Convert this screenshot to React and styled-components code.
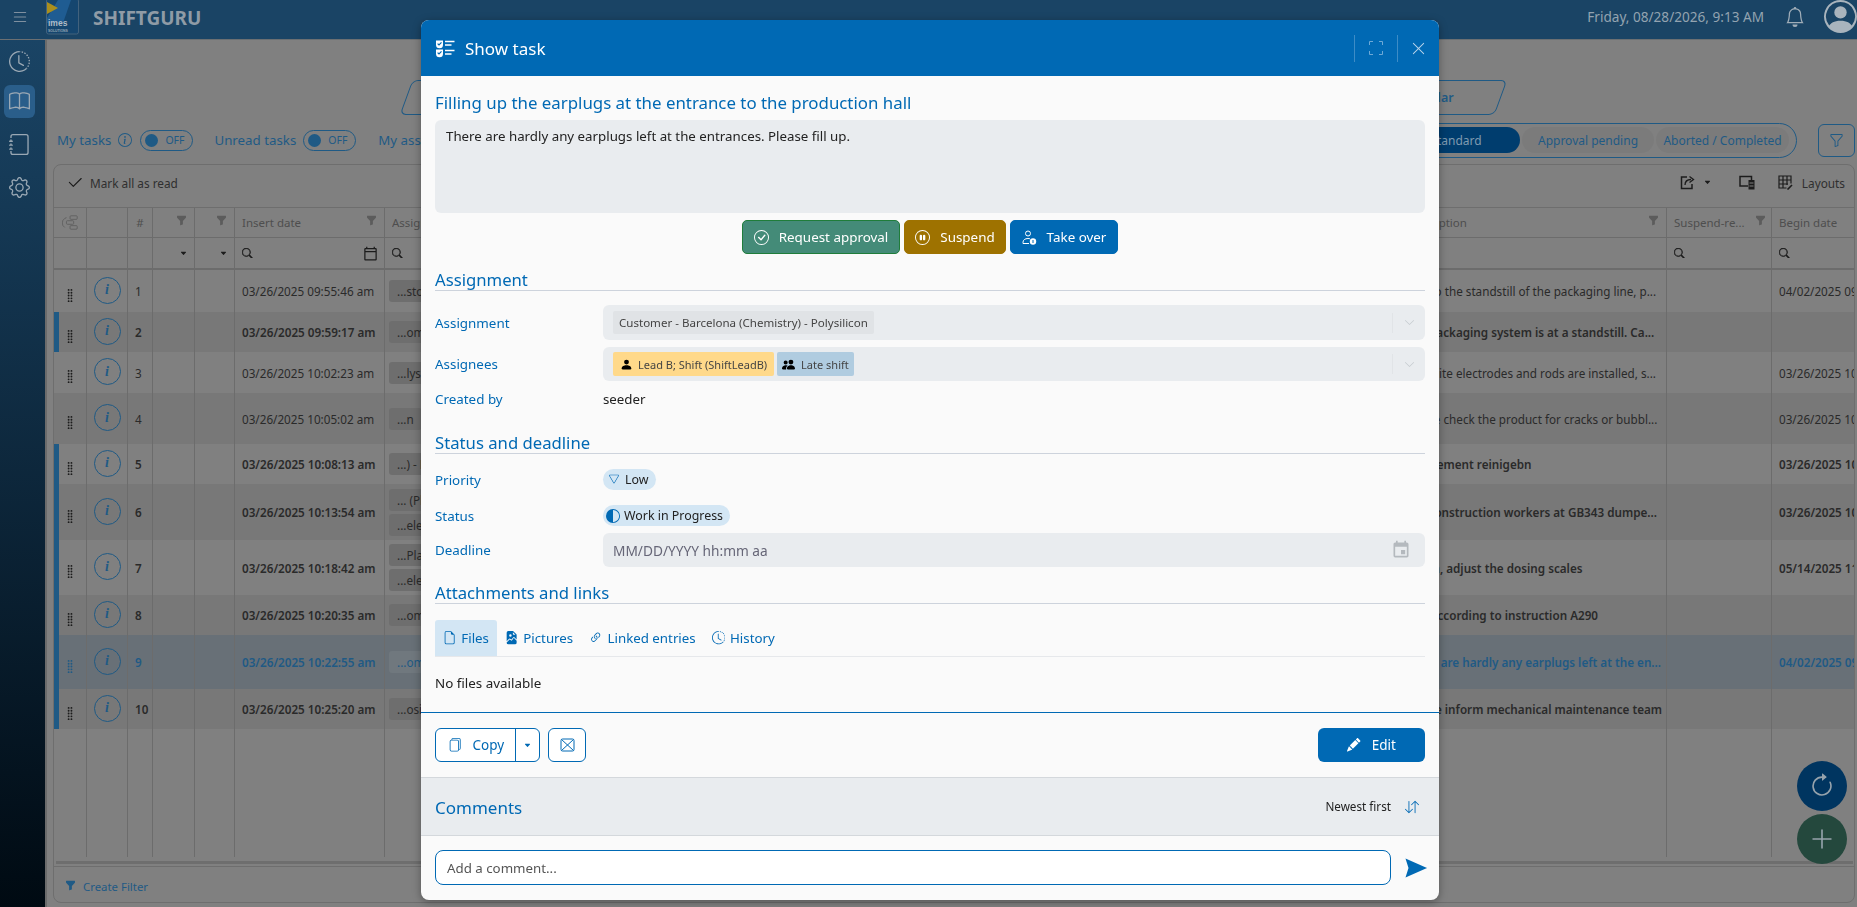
import React from 'react';
import styled, { createGlobalStyle } from 'styled-components';
import {
  BsList, BsClockHistory, BsBook, BsJournal, BsGear, BsBell, BsPersonCircle, BsInfoCircle, BsFunnel, BsFunnelFill,
  BsCheck2, BsSearch, BsCaretDownFill, BsXLg, BsCheckCircle, BsPauseCircle, BsChevronDown, BsPersonFill, BsPeopleFill,
  BsTriangle, BsCircleHalf, BsFileEarmark, BsFileEarmarkImageFill, BsLink45Deg,
  BsFiles, BsPencilFill, BsArrowDownUp, BsArrowClockwise, BsPlusLg, BsGripVertical,
} from 'react-icons/bs';
import { MdOutlineCalendarToday, MdEvent } from 'react-icons/md';

const BLUE = '#0069b4';
const DIMBLUE = '#1f5a85';
const FONT = '"Noto Sans", "Open Sans", Arial, sans-serif';

const Global = createGlobalStyle`
  html, body { margin: 0; padding: 0; height: 100%; overflow: hidden; }
  body { font-family: ${FONT}; font-size: 11px; background: #808080; color: #2a2a2a; }
  * { box-sizing: border-box; }
`;

const Page = styled.div`
  width: 1857px; height: 907px; display: flex; flex-direction: column; overflow: hidden; background: #808080;
`;
const Topbar = styled.header`
  height: 40px; flex: none; display: flex; align-items: center; background: #1a4465;
  border-bottom: 1px solid #6b6f72; color: #93a3b0;
`;
const Burger = styled.div`
  width: 40px; display: flex; justify-content: center; font-size: 18px; color: #7f90a0; margin-top: -6px;
`;
const LogoBox = styled.svg`
  width: 33px; height: 35px; margin-left: 6px; align-self: flex-start; flex: none;
`;
const Brand = styled.div`
  margin: -4px 0 0 14px; font-size: 19px; font-weight: 700; color: #8f9ba6;
`;
const TopRight = styled.div`
  margin-left: auto; display: flex; align-items: center; margin-top: -6px;
`;
const Clock = styled.span`
  font-size: 13.6px; color: #93a3b0;
`;
const Bell = styled(BsBell)`
  font-size: 20px; margin-left: 21px; color: #a0adb8;
`;
const Avatar = styled(BsPersonCircle)`
  font-size: 33px; margin-left: 19px; color: #a9b4bd;
`;

const Body = styled.div`
  flex: 1; min-height: 0; display: flex;
`;
const Sidebar = styled.nav`
  width: 47px; flex: none; background: linear-gradient(#1a4465, #000a12); display: flex; flex-direction: column;
  align-items: center; padding: 5px 6px 0 0; border-right: 2px solid #6b6b6b;
`;
const SideItem = styled.div`
  width: 31px; height: 33px; margin-bottom: ${p => p.$gap}px; border-radius: 6px; display: flex; align-items: center;
  justify-content: center; font-size: 21px; color: #9aa8b4; background: ${p => (p.$active ? '#2a5e8a' : 'transparent')};
`;
const Main = styled.main`
  flex: 1; min-width: 0; display: flex; flex-direction: column; padding: 0 2px 4px 6px;
`;
const TabRow = styled.div`
  display: flex; margin: 40px 0 0 353px; height: 35px;
`;
const TabShape = styled.div`
  width: ${p => p.$w}px; height: 35px; padding-left: ${p => p.$pl || 0}px; border: 1px solid ${DIMBLUE}; border-radius: 6px; transform: skewX(-20deg);
  display: flex; align-items: center; justify-content: center; flex: none;
`;
const TabLabel = styled.span`
  transform: skewX(20deg); font-size: 12.5px; font-weight: 600; color: ${DIMBLUE};
`;
const FilterBar = styled.div`
  display: flex; align-items: center; margin-top: 8px; height: 34px; padding-left: 4px;
`;
const FilterLabel = styled.span`
  font-size: 13.3px; color: ${DIMBLUE}; margin-left: ${p => p.$ml || 0}px;
`;
const InfoSmall = styled(BsInfoCircle)`
  font-size: 14px; color: ${DIMBLUE}; margin-left: 7px;
`;
const Toggle = styled.span`
  width: 53px; height: 21px; border: 1px solid ${DIMBLUE}; border-radius: 11px; margin-left: ${p => p.$ml}px;
  display: flex; align-items: center; padding-left: 4px; gap: 7px; font-size: 10.5px; color: ${DIMBLUE}; flex: none;
`;
const Knob = styled.span`
  width: 13px; height: 13px; border-radius: 50%; background: ${DIMBLUE};
`;
const Segment = styled.div`
  margin-left: auto; height: 35px; width: 500px; border: 1px solid ${DIMBLUE}; border-radius: 18px; display: flex;
  align-items: center; justify-content: flex-end; gap: 2px; padding: 0 7px 0 0;
`;
const SegItem = styled.span`
  height: 26px; width: ${p => p.$w}px; display: flex; align-items: center; justify-content: center; border-radius: 13px;
  padding-left: ${p => p.$pl || 0}px;
  font-size: 12px; color: ${p => (p.$active ? '#7f9ab0' : DIMBLUE)}; background: ${p => (p.$active ? '#003d6e' : '#7b7b7b')};
`;
const FilterBtn = styled.div`
  width: 37px; height: 33px; border: 1px solid ${DIMBLUE}; border-radius: 6px; margin-left: 21px; display: flex;
  align-items: center; justify-content: center; color: ${DIMBLUE}; font-size: 15px;
`;
const Card = styled.section`
  margin-top: 7px; flex: 1; min-height: 0; border: 1px solid #6e6e6e; border-radius: 8px; overflow: hidden;
  display: flex; flex-direction: column;
`;
const Toolbar = styled.div`
  height: 43px; flex: none; display: flex; align-items: center; padding: 0 9px 7px 12px; font-size: 11.8px; color: #2f2f2f;
  border-bottom: 1px solid #6e6e6e;
`;
const ToolCheck = styled(BsCheck2)`
  font-size: 18px; color: #1c1c1c; margin-right: 6px;
`;
const ToolRight = styled.div`
  margin-left: auto; display: flex; align-items: center; color: #1c1c1c;
`;
const ToolIcon = styled.span`
  font-size: ${p => p.$size || 15}px; margin-left: ${p => p.$ml || 0}px; display: flex; color: #1c1c1c;
`;
const ToolText = styled.span`
  margin-left: 9px; font-size: 11.8px; color: #2f2f2f;
`;

const COLS = '33px 41px 25px 42px 40px 150px 1013px 269px 105px 86px';
const Line = styled.div`
  display: grid; grid-template-columns: ${COLS}; height: ${p => p.$h}px; flex: ${p => (p.$fill ? 1 : 'none')};
  background: ${p => p.$bg || 'transparent'}; border-bottom: ${p => p.$bb || 'none'};
  color: ${p => (p.$sel ? DIMBLUE : '#2a2a2a')}; font-weight: ${p => (p.$bold ? 600 : 400)};
`;
const Cell = styled.div`
  position: relative; border-right: 1px solid #6c6c6c; display: flex; align-items: center; padding: 0 7px 0 ${p => p.$pl ?? 7}px; min-width: 0;
  font-size: 11.7px; white-space: nowrap; overflow: hidden; justify-content: ${p => p.$j || 'flex-start'};
`;
const HeadText = styled.span`
  color: #4e4e4e; font-size: 11.5px; overflow: hidden;
`;
const HeadFunnel = styled(BsFunnelFill)`
  position: absolute; top: 7px; right: ${p => p.$r ?? 7}px; font-size: 11px; color: #5c5c5c;
`;
const SearchIcon = styled(BsSearch)`
  font-size: 10.5px; color: #1c1c1c; stroke: #1c1c1c; stroke-width: .7px;
`;
const CalIcon = styled(MdOutlineCalendarToday)`
  margin-left: auto; font-size: 15px; color: #1c1c1c; margin-right: -1px;
`;
const Caret = styled(BsCaretDownFill)`
  margin-left: auto; font-size: 7px; color: #1c1c1c;
`;
const GroupIcon = styled.svg`
  width: 19px; height: 17px; margin-left: 1px;
`;
const Unread = styled.span`
  position: absolute; left: 0; top: 0; bottom: 0; width: 5px; background: ${DIMBLUE};
`;
const Grip = styled(BsGripVertical)`
  font-size: 15px; margin: 8px 0 0 1px; color: ${p => (p.$sel ? DIMBLUE : '#1c1c1c')};
`;
const InfoCircle = styled.span`
  width: 27px; height: 27px; border: 1px solid ${DIMBLUE}; border-radius: 50%; display: flex; align-items: center;
  justify-content: center; font: italic 600 14px "Liberation Serif", serif; color: ${DIMBLUE}; flex: none; margin-top: -2px;
`;
const Tags = styled.div`
  display: flex; flex-direction: column; gap: 3px;
`;
const Tag = styled.span`
  height: 22px; padding: 0 8px; background: ${p => (p.$sel ? '#70787e' : '#6e6e6e')}; border-radius: 3px; display: flex; align-items: center;
  font-weight: 400; margin-left: -3px;
`;
const ScrollTrack = styled.div`
  height: 3px; margin: 4px 1px 2px 2px; background: #6e6e6e; flex: none;
`;
const CardFoot = styled.div`
  height: 36px; flex: none; border-top: 1px solid #6e6e6e; display: flex; align-items: center; padding: 3px 0 0 11px;
  color: ${DIMBLUE}; font-size: 11.4px; gap: 7px;
`;
const FootFunnel = styled(BsFunnelFill)`
  font-size: 11px; margin-top: -2px;
`;
const Fab = styled.div`
  position: fixed; left: 1797px; top: ${p => p.$top}px; width: 50px; height: 50px; border-radius: 50%;
  background: ${p => p.$bg}; color: #96a3ac; display: flex; align-items: center; justify-content: center; font-size: ${p => p.$fs}px;
`;

const Modal = styled.div`
  position: fixed; left: 421px; top: 20px; width: 1018px; height: 880px; background: #fafafa; border-radius: 8px;
  overflow: hidden; display: flex; flex-direction: column; box-shadow: 0 2px 8px rgba(0,0,0,.35);
`;
const ModalHead = styled.div`
  height: 56px; flex: none; background: ${BLUE}; display: flex; align-items: center; padding: 0 0 0 14px; color: #fff;
`;
const HeadTitle = styled.span`
  font-size: 17px; margin: 0 auto 0 10px;
`;
const HeadDiv = styled.span`
  width: ${p => p.$w}px; height: 27px; display: flex; align-items: center; justify-content: center;
  border-left: 1px solid #3d8cc6; font-size: 15px; color: #b8d4ea;
`;
const ModalBody = styled.div`
  flex: 1; min-height: 0; padding: 14px 14px 0; border-bottom: 1px solid ${BLUE};
`;
const TaskTitle = styled.h2`
  margin: 0; font-size: 16.85px; line-height: 26px; font-weight: 400; color: ${BLUE};
`;
const Descr = styled.div`
  margin-top: 4px; height: 93px; background: #e9ecef; border-radius: 6px; padding: 6px 11px; font-size: 13.3px; color: #222; line-height: 20px;
`;
const Actions = styled.div`
  margin-top: 7px; display: flex; justify-content: center; gap: 4px;
`;
const ActionBtn = styled.div`
  height: 34px; width: ${p => p.$w}px; background: ${p => p.$bg}; border: 1px solid ${p => p.$bd}; border-radius: 5px; color: #fff;
  font-size: 13.4px; display: flex; align-items: center; justify-content: center; gap: 10px;
  svg { font-size: 15px; }
`;
const SectionHead = styled.h3`
  margin: ${p => p.$top}px 0 0; height: 21px; line-height: 20px; border-bottom: 1px solid #cdd3dc;
  font-size: 16.7px; font-weight: 400; color: ${BLUE};
`;
const Field = styled.div`
  display: grid; grid-template-columns: 168px 1fr; align-items: center; margin-top: ${p => p.$top}px;
`;
const FieldLabel = styled.span`
  font-size: 13.4px; color: ${BLUE};
`;
const SelectBox = styled.div`
  height: ${p => p.$h}px; background: #e9ecef; border-radius: 6px; display: flex; align-items: center; padding-left: 10px; gap: 3px;
`;
const SelChip = styled.span`
  height: ${p => p.$h}px; padding: 0 ${p => p.$px}px; background: ${p => p.$bg}; display: flex; align-items: center; gap: ${p => p.$gap || 7}px; font-size: ${p => p.$fs || 11}px; color: #444;
  border-radius: 2px;
`;
const SelEnd = styled.span`
  margin-left: auto; width: 33px; height: 20px; border-left: 1px solid #e1e4e7; display: flex; align-items: center; justify-content: center;
  color: #c5cacf; font-size: 11px; stroke-width: 1px;
`;
const ChipIcon = styled.span`
  display: flex; color: #000; font-size: 13px;
`;
const Plain = styled.span`
  font-size: 13.3px; color: #222;
`;
const Pill = styled.span`
  height: 21px; width: ${p => p.$w}px; border-radius: 11px; background: #d3e6f4; display: flex; align-items: center; padding-left: ${p => p.$pl}px; gap: ${p => p.$gap}px;
  font-size: 12.4px; color: #222;
`;
const PillTri = styled(BsTriangle)`
  font-size: 10px; color: ${BLUE}; transform: rotate(180deg); margin-top: -2px;
`;
const PillHalf = styled(BsCircleHalf)`
  font-size: 14px; color: ${BLUE}; 
`;
const DateHolder = styled.span`
  font-size: 13.7px; color: #667;
`;
const DateIcon = styled(MdEvent)`
  margin: 0 14px 0 auto; font-size: 20px; color: #b4b9be;
`;
const AttachTabs = styled.div`
  margin-top: 16px; height: 37px; border-bottom: 1px solid #e6e8eb; display: flex;
`;
const AttachTab = styled.div`
  height: 36px; padding: 0 8px 0 8px; display: flex; align-items: center; gap: 5px; font-size: 13.3px; color: ${BLUE};
  background: ${p => (p.$active ? '#d3e6f4' : 'transparent')}; border-radius: 3px 3px 0 0;
`;
const Empty = styled.div`
  margin-top: 16px; font-size: 13.4px; color: #222; line-height: 21px;
`;
const ModalFoot = styled.div`
  height: 64px; flex: none; display: flex; align-items: center; padding: 0 14px; gap: 8px;
`;
const SplitBtn = styled.div`
  height: 34px; width: 105px; border: 1px solid ${BLUE}; border-radius: 6px; background: #fff; display: flex; color: ${BLUE};
`;
const SplitMain = styled.span`
  width: 80px; display: flex; align-items: center; padding-left: 12px; gap: 11px; font-size: 13.5px; border-right: 1px solid ${BLUE};
`;
const SplitCaret = styled.span`
  flex: 1; display: flex; align-items: center; justify-content: center; font-size: 7px;
`;
const MailBtn = styled.span`
  height: 34px; width: 38px; border: 1px solid ${BLUE}; border-radius: 6px; background: #fff; display: flex; align-items: center; justify-content: center; color: ${BLUE}; font-size: 14px;
`;
const EditBtn = styled.div`
  margin-left: auto; height: 34px; width: 107px; background: ${BLUE}; border-radius: 6px; color: #fff; font-size: 13.5px; display: flex; align-items: center; justify-content: center; gap: 11px;
`;
const CommentsBand = styled.div`
  height: 59px; flex: none; background: #e9ecef; border-top: 1px solid #d4d8dc; border-bottom: 1px solid #d4d8dc; display: flex; align-items: center; padding: 2px 20px 0 14px;
`;
const CommentsTitle = styled.span`
  font-size: 17px; color: ${BLUE};
`;
const SortLabel = styled.span`
  margin-left: auto; font-size: 11.7px; color: #222; margin-top: -3px;
`;
const SortIcon = styled(BsArrowDownUp)`
  margin: -2px 0 0 14px; font-size: 14px; color: ${BLUE};
`;
const CommentBar = styled.div`
  height: 64px; flex: none; display: flex; align-items: center; padding: 0 12px 1px 14px; gap: 14px;
`;
const CommentInput = styled.input`
  flex: 1; height: 35px; border: 1px solid ${BLUE}; border-radius: 8px; padding: 0 11px; background: #fff; font: 13.3px ${FONT}; outline: none;
  &::placeholder { color: #555; opacity: 1; }
`;

const rows = [
  { n: 1, h: 42, date: '03/26/2025 09:55:46 am', tags: ['...stoppage'], text: 'Due to the standstill of the packaging line, p...', begin: '04/02/2025 09:15:00 am' },
  { n: 2, h: 40, bold: 1, dark: 1, date: '03/26/2025 09:59:17 am', tags: ['...omation'], text: 'The packaging system is at a standstill. Ca...' },
  { n: 3, h: 41, date: '03/26/2025 10:02:23 am', tags: ['...lysilicon'], text: 'Graphite electrodes and rods are installed, s...', begin: '03/26/2025 10:15:00 am' },
  { n: 4, h: 51, dark: 1, date: '03/26/2025 10:05:02 am', tags: ['...n'], text: 'Please check the product for cracks or bubbl...', begin: '03/26/2025 10:15:00 am' },
  { n: 5, h: 40, bold: 1, pl: 1, date: '03/26/2025 10:08:13 am', tags: ['...) - Line'], text: 'Replacement reinigebn', begin: '03/26/2025 10:15:00 am' },
  { n: 6, h: 56, bold: 1, dark: 1, pl: 13, date: '03/26/2025 10:13:54 am', tags: ['... (Plant)', '...electrode'], text: 'All construction workers at GB343 dumpe...', begin: '03/26/2025 10:15:00 am' },
  { n: 7, h: 55, bold: 1, pl: 10, date: '03/26/2025 10:18:42 am', tags: ['...Plant', '...electrode'], text: 'Clean, adjust the dosing scales', begin: '05/14/2025 11:15:00 am' },
  { n: 8, h: 40, bold: 1, dark: 1, pl: 1, date: '03/26/2025 10:20:35 am', tags: ['...omation'], text: 'Refill according to instruction A290' },
  { n: 9, h: 54, bold: 1, sel: 1, date: '03/26/2025 10:22:55 am', tags: ['...omation'], text: 'There are hardly any earplugs left at the en...', begin: '04/02/2025 09:15:00 am' },
  { n: 10, h: 40, bold: 1, dark: 1, date: '03/26/2025 10:25:20 am', tags: ['...osition'], text: 'Please inform mechanical maintenance team' },
];

const ChecklistIcon = () => (
  <svg width="20" height="19" viewBox="0 0 20 19" fill="none">
    <path d="M1 1.5h7v4.2a3.5 3.5 0 0 1-7 0z" fill="#fff" />
    <path d="M1 10.5h7v4.2a3.5 3.5 0 0 1-7 0z" fill="#fff" />
    <path d="M2.6 4.6l1.4 1.4 2.5-2.6M2.6 13.6l1.4 1.4 2.5-2.6" stroke={BLUE} strokeWidth="1.2" />
    <path d="M10 2.5h9.5M10 6h6.5M10 11.5h9.5M10 15h6.5" stroke="#fff" strokeWidth="1.5" />
  </svg>
);

const FullIcon = () => (
  <svg width="14" height="14" viewBox="0 0 14 14" fill="none" stroke="#6ea9d6" strokeWidth="1">
    <path d="M.5 4V.5H4M10 .5h3.5V4M13.5 10v3.5H10M4 13.5H.5V10" />
  </svg>
);

const TakeOverIcon = () => (
  <svg width="15" height="15" viewBox="0 0 15 15" fill="none" stroke="#fff" strokeWidth="1">
    <circle cx="6" cy="3.5" r="2.5" />
    <path d="M1 13.5v-1.2C1 10 3 8.5 6 8.5c.8 0 1.5.1 2 .3M1 13.5h6" />
    <circle cx="11" cy="11.5" r="3.2" fill="#fff" stroke="none" />
    <path d="M11 10v3" stroke={BLUE} strokeWidth="1" />
  </svg>
);

const MailIcon = () => (
  <svg width="15" height="14" viewBox="0 0 15 14" fill="none" stroke={BLUE} strokeWidth="1">
    <rect x="1" y="1" width="13" height="12" rx="1.5" />
    <path d="M1.5 1.5l12 11M13.5 1.5l-12 11" />
  </svg>
);

const SendArrow = () => (
  <svg width="22" height="20" viewBox="0 0 22 20">
    <path d="M.5 .5L22 10 .5 19.5 3.5 10z" fill={BLUE} />
  </svg>
);

const ExportIcon = () => (
  <svg width="15" height="15" viewBox="0 0 15 15" fill="none" stroke="#1c1c1c" strokeWidth="1.5">
    <path d="M7 2H1.5v11.5H12V9" />
    <path d="M5 10c0-3.5 2.5-5.5 6-5.5M9.5 1.5l4 3-4 3" strokeWidth="1.3" />
  </svg>
);

const ColumnsIcon = () => (
  <svg width="16" height="15" viewBox="0 0 16 15" fill="none" stroke="#1c1c1c" strokeWidth="1.5">
    <path d="M9 11H1V1.5h11.5V5" />
    <rect x="9.5" y="5" width="6" height="9.5" fill="#1c1c1c" stroke="none" />
    <path d="M10.5 8h4M10.5 11h4" stroke="#808080" strokeWidth="1" />
  </svg>
);

const LayoutIcon = () => (
  <svg width="15" height="15" viewBox="0 0 15 15" fill="none" stroke="#1c1c1c" strokeWidth="1.2">
    <path d="M8.5 13H1V1h12v7.5M1 5h12M1 9h9M5 1v12M9 1v9" />
    <path d="M9.5 14.5l4.5-4.5" strokeWidth="1.6" />
  </svg>
);

const Logo = () => (
  <LogoBox viewBox="0 0 33 35">
    <rect x="0.5" y="-1" width="32" height="35" rx="2" fill="#15466f" stroke="#42627d" />
    <path d="M12 0h13L17 23H1V18z" fill="#1f5c92" />
    <path d="M1 2l11 6-11 6z" fill="#a98f1e" />
    <text x="2" y="26" fontSize="8.5" fontWeight="800" fill="#b0bcc6" fontFamily="Liberation Sans, sans-serif">imes</text>
    <text x="2" y="31.5" fontSize="3.4" fontWeight="700" fill="#97a7b3" fontFamily="Liberation Sans, sans-serif">SOLUTIONS</text>
  </LogoBox>
);

const GroupGlyph = () => (
  <GroupIcon viewBox="0 0 19 17" fill="none" stroke="#5f5f5f" strokeWidth="1">
    <path d="M3 14A6 6 0 0 1 3 4l2-1" />
    <rect x="9" y="1" width="8" height="4" rx="1" />
    <rect x="5" y="6.5" width="8" height="4" rx="1" />
    <rect x="9" y="12" width="8" height="4" rx="1" />
  </GroupIcon>
);

export default function App() {
  return (
    <Page>
      <Global />
      <Topbar>
        <Burger><BsList /></Burger>
        <Logo />
        <Brand>SHIFTGURU</Brand>
        <TopRight>
          <Clock>Friday, 08/28/2026, 9:13 AM</Clock>
          <Bell />
          <Avatar />
        </TopRight>
      </Topbar>
      <Body>
        <Sidebar>
          <SideItem $gap={7}><BsClockHistory /></SideItem>
          <SideItem $gap={10} $active><BsBook /></SideItem>
          <SideItem $gap={10}><BsJournal /></SideItem>
          <SideItem $gap={0}><BsGear /></SideItem>
        </Sidebar>
        <Main>
          <TabRow>
            <TabShape $w={939}><TabLabel>Task list</TabLabel></TabShape>
            <TabShape $w={156} $pl={6}><TabLabel>Calendar</TabLabel></TabShape>
          </TabRow>
          <FilterBar>
            <FilterLabel>My tasks</FilterLabel>
            <InfoSmall />
            <Toggle $ml={8}><Knob />OFF</Toggle>
            <FilterLabel $ml={21}>Unread tasks</FilterLabel>
            <Toggle $ml={7}><Knob />OFF</Toggle>
            <FilterLabel $ml={22}>My assigned tasks</FilterLabel>
            <Segment>
              <SegItem $active $w={150} $pl={22}>Standard</SegItem>
              <SegItem $w={132}>Approval pending</SegItem>
              <SegItem $w={133}>Aborted / Completed</SegItem>
            </Segment>
            <FilterBtn><BsFunnel /></FilterBtn>
          </FilterBar>
          <Card>
            <Toolbar>
              <ToolCheck />Mark all as read
              <ToolRight>
                <ToolIcon><ExportIcon /></ToolIcon>
                <ToolIcon $size={7} $ml={9}><BsCaretDownFill /></ToolIcon>
                <ToolIcon $ml={28}><ColumnsIcon /></ToolIcon>
                <ToolIcon $ml={23}><LayoutIcon /></ToolIcon>
                <ToolText>Layouts</ToolText>
              </ToolRight>
            </Toolbar>
            <Line $h={30} $bb="1px solid #6c6c6c">
              <Cell><GroupGlyph /></Cell>
              <Cell />
              <Cell $j="center"><HeadText>#</HeadText></Cell>
              <Cell><HeadFunnel /></Cell>
              <Cell><HeadFunnel /></Cell>
              <Cell><HeadText>Insert date</HeadText><HeadFunnel /></Cell>
              <Cell><HeadText>Assignment</HeadText></Cell>
              <Cell><HeadText>Description</HeadText><HeadFunnel /></Cell>
              <Cell><HeadText>Suspend-re...</HeadText><HeadFunnel $r={5} /></Cell>
              <Cell><HeadText>Begin date</HeadText></Cell>
            </Line>
            <Line $h={32} $bb="2px solid #6c6c6c">
              <Cell />
              <Cell />
              <Cell />
              <Cell><Caret /></Cell>
              <Cell><Caret /></Cell>
              <Cell><SearchIcon /><CalIcon /></Cell>
              <Cell><SearchIcon /></Cell>
              <Cell />
              <Cell><SearchIcon /></Cell>
              <Cell><SearchIcon /></Cell>
            </Line>
            {rows.map(r => (
              <Line key={r.n} $h={r.h} $bold={r.bold} $sel={r.sel} $bg={r.sel ? '#687077' : r.dark ? '#787878' : '#808080'}>
                <Cell $j="center">
                  {(r.bold || r.sel) && <Unread />}
                  <Grip $sel={r.sel} />
                </Cell>
                <Cell $j="center"><InfoCircle>i</InfoCircle></Cell>
                <Cell>{r.n}</Cell>
                <Cell />
                <Cell />
                <Cell>{r.date}</Cell>
                <Cell><Tags>{r.tags.map(t => <Tag key={t} $sel={r.sel}>{t}</Tag>)}</Tags></Cell>
                <Cell $pl={r.pl}>{r.text}</Cell>
                <Cell />
                <Cell>{r.begin}</Cell>
              </Line>
            ))}
            <Line $fill>
              <Cell /><Cell /><Cell /><Cell /><Cell /><Cell /><Cell /><Cell /><Cell /><Cell />
            </Line>
            <ScrollTrack />
            <CardFoot><FootFunnel />Create Filter</CardFoot>
          </Card>
        </Main>
      </Body>
      <Fab $top={761} $bg="#003560" $fs={26}><BsArrowClockwise /></Fab>
      <Fab $top={814} $bg="#24483d" $fs={26}><BsPlusLg /></Fab>

      <Modal>
        <ModalHead>
          <ChecklistIcon />
          <HeadTitle>Show task</HeadTitle>
          <HeadDiv $w={43}><FullIcon /></HeadDiv>
          <HeadDiv $w={42}><BsXLg /></HeadDiv>
        </ModalHead>
        <ModalBody>
          <TaskTitle>Filling up the earplugs at the entrance to the production hall</TaskTitle>
          <Descr>There are hardly any earplugs left at the entrances. Please fill up.</Descr>
          <Actions>
            <ActionBtn $w={158} $bg="#448b78" $bd="#1f7d3a"><BsCheckCircle />Request approval</ActionBtn>
            <ActionBtn $w={102} $bg="#9e7200" $bd="#9e7200"><BsPauseCircle />Suspend</ActionBtn>
            <ActionBtn $w={108} $bg={BLUE} $bd={BLUE}><TakeOverIcon />Take over</ActionBtn>
          </Actions>

          <SectionHead $top={16}>Assignment</SectionHead>
          <Field $top={14}>
            <FieldLabel>Assignment</FieldLabel>
            <SelectBox $h={35}>
              <SelChip $h={23} $px={6} $fs={11.55} $bg="#e0e3e6">Customer - Barcelona (Chemistry) - Polysilicon</SelChip>
              <SelEnd><BsChevronDown /></SelEnd>
            </SelectBox>
          </Field>
          <Field $top={7}>
            <FieldLabel>Assignees</FieldLabel>
            <SelectBox $h={34}>
              <SelChip $h={24} $px={7} $gap={5} $bg="#ffd98a"><ChipIcon><BsPersonFill /></ChipIcon>Lead B; Shift (ShiftLeadB)</SelChip>
              <SelChip $h={24} $px={5} $gap={6} $bg="#b0cce0"><ChipIcon><BsPeopleFill /></ChipIcon>Late shift</SelChip>
              <SelEnd><BsChevronDown /></SelEnd>
            </SelectBox>
          </Field>
          <Field $top={9}>
            <FieldLabel>Created by</FieldLabel>
            <Plain>seeder</Plain>
          </Field>

          <SectionHead $top={25}>Status and deadline</SectionHead>
          <Field $top={15}>
            <FieldLabel>Priority</FieldLabel>
            <Pill $w={53} $pl={6} $gap={6}><PillTri />Low</Pill>
          </Field>
          <Field $top={15}>
            <FieldLabel>Status</FieldLabel>
            <Pill $w={127} $pl={3} $gap={4}><PillHalf />Work in Progress</Pill>
          </Field>
          <Field $top={7}>
            <FieldLabel>Deadline</FieldLabel>
            <SelectBox $h={34}>
              <DateHolder>MM/DD/YYYY hh:mm aa</DateHolder>
              <DateIcon />
            </SelectBox>
          </Field>

          <SectionHead $top={16}>Attachments and links</SectionHead>
          <AttachTabs>
            <AttachTab $active><BsFileEarmark />Files</AttachTab>
            <AttachTab><BsFileEarmarkImageFill />Pictures</AttachTab>
            <AttachTab><BsLink45Deg />Linked entries</AttachTab>
            <AttachTab><BsClockHistory />History</AttachTab>
          </AttachTabs>
          <Empty>No files available</Empty>
        </ModalBody>
        <ModalFoot>
          <SplitBtn>
            <SplitMain><BsFiles />Copy</SplitMain>
            <SplitCaret><BsCaretDownFill /></SplitCaret>
          </SplitBtn>
          <MailBtn><MailIcon /></MailBtn>
          <EditBtn><BsPencilFill />Edit</EditBtn>
        </ModalFoot>
        <CommentsBand>
          <CommentsTitle>Comments</CommentsTitle>
          <SortLabel>Newest first</SortLabel>
          <SortIcon />
        </CommentsBand>
        <CommentBar>
          <CommentInput placeholder="Add a comment..." readOnly />
          <SendArrow />
        </CommentBar>
      </Modal>
    </Page>
  );
}
